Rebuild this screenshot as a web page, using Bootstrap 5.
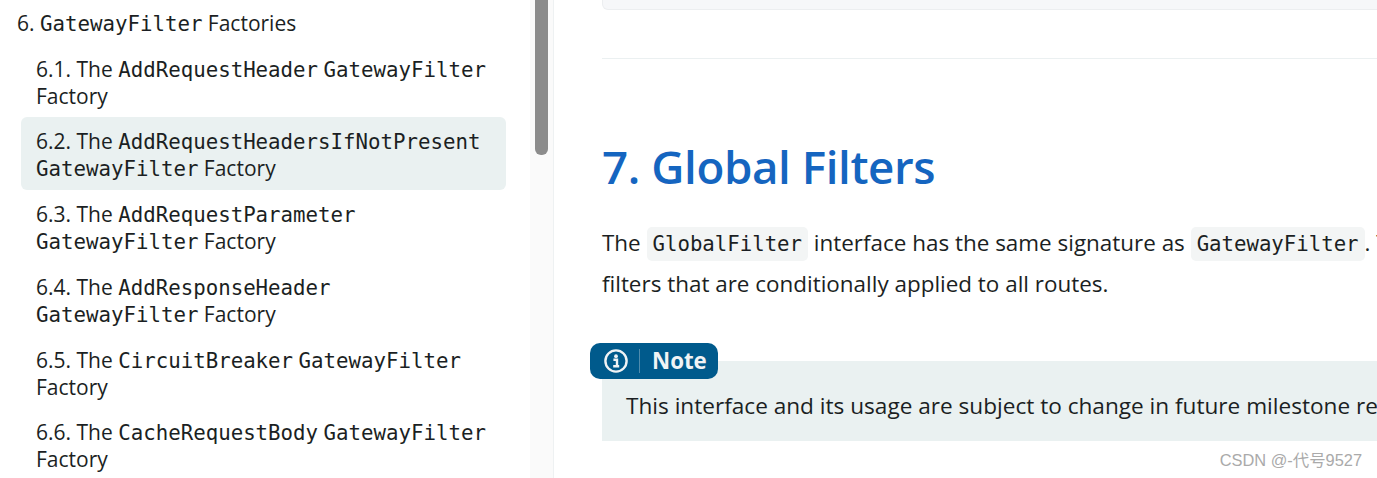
<!DOCTYPE html>
<html lang="en">
<head>
<meta charset="utf-8">
<title>Global Filters</title>
<link href="https://cdn.jsdelivr.net/npm/bootstrap@5.3.0/dist/css/bootstrap.min.css" rel="stylesheet">
<style>
html,body{height:478px;overflow:hidden;}
body{font-family:"Open Sans","Noto Sans",sans-serif;color:#1b1f23;background:#fff;font-size:21px;line-height:27px;}
code,.mono{font-family:"DejaVu Sans Mono","Liberation Mono",monospace;color:#1b1f23;line-height:1;}
.toc-pane{width:554px;height:478px;border-right:1px solid #eef1f2;}
.toc-list{width:530px;font-size:21px;}
.toc-top{padding:10px 0 0 17px;height:44.6px;}
.toc-entry{margin-left:21px;width:485px;height:72.76px;padding:11px 0 0 15px;border-radius:6px;white-space:nowrap;}
.toc-entry .mono,.toc-top .mono{font-size:20.75px;}
.toc-active{background:#eaf1f1;}
.toc-track{width:23px;background:#fafafa;padding-left:5px;}
.toc-thumb{width:13px;height:155px;background:#8c8c8c;border-radius:0 0 6px 6px;}
.main-pane{padding-left:48px;min-width:0;overflow:hidden;}
.code-tail{width:900px;height:10px;background:#f6f7f9;border:1px solid #eceef0;border-top:0;border-radius:0 0 6px 6px;}
.rule{width:900px;height:1px;background:#ebf0f1;margin-top:48px;}
.sec-title{font-size:45.7px;line-height:60px;font-weight:600;color:#1565c0;margin:77px 0 0;letter-spacing:-.4px;white-space:nowrap;}
.para{width:900px;margin:26px 0 0;line-height:41px;font-size:22.45px;white-space:nowrap;}
.para code{font-size:20.7px;background:#f3f5f5;border-radius:5px;padding:5px 6px;}
.note-box{width:900px;height:80px;background:#eaf1f1;margin-top:57px;padding:26px 0 0 24px;font-size:22.6px;white-space:nowrap;position:relative;line-height:38px;}
.note-tag{position:absolute;left:-12px;top:-18px;width:128px;height:36px;background:#005a8c;border-radius:10px;color:#f0f3f5;}
.note-tag svg{width:24px;height:24px;margin-left:14px;}
.tag-sep{width:1px;height:24px;background:#4f8bad;margin:0 12px 0 11px;}
.tag-label{font-weight:700;font-size:22.3px;line-height:36px;}
.mark-csdn{position:absolute;right:15px;bottom:8px;font:16.4px/20px "Liberation Sans","Noto Sans CJK SC",sans-serif;color:#aaa;}
</style>
</head>
<body class="d-flex position-relative">
<aside class="toc-pane d-flex flex-shrink-0">
  <div class="toc-list flex-shrink-0">
    <div class="toc-top">6. <span class="mono">GatewayFilter</span> Factories</div>
    <div class="toc-entry">6.1. The <span class="mono">AddRequestHeader</span> <span class="mono">GatewayFilter</span><br>Factory</div>
    <div class="toc-entry toc-active">6.2. The <span class="mono">AddRequestHeadersIfNotPresent</span><br><span class="mono">GatewayFilter</span> Factory</div>
    <div class="toc-entry">6.3. The <span class="mono">AddRequestParameter</span><br><span class="mono">GatewayFilter</span> Factory</div>
    <div class="toc-entry">6.4. The <span class="mono">AddResponseHeader</span><br><span class="mono">GatewayFilter</span> Factory</div>
    <div class="toc-entry">6.5. The <span class="mono">CircuitBreaker</span> <span class="mono">GatewayFilter</span><br>Factory</div>
    <div class="toc-entry">6.6. The <span class="mono">CacheRequestBody</span> <span class="mono">GatewayFilter</span><br>Factory</div>
  </div>
  <div class="toc-track"><div class="toc-thumb"></div></div>
</aside>
<main class="main-pane flex-grow-1">
  <div class="code-tail"></div>
  <div class="rule"></div>
  <h2 class="sec-title">7. Global Filters</h2>
  <p class="para">The <code>GlobalFilter</code> interface has the same signature as <code>GatewayFilter</code>. The main difference is that these are special<br>filters that are conditionally applied to all routes.</p>
  <div class="note-box">
    <div class="note-tag d-flex align-items-center">
      <svg viewBox="0 0 24 24" fill="none" aria-hidden="true"><circle cx="12" cy="12" r="10.6" stroke="#f0f3f5" stroke-width="2.4"/><circle cx="12" cy="7.2" r="1.9" fill="#f0f3f5"/><path d="M9.4 10.8h3.6v6.2M9.2 17.2h6" stroke="#f0f3f5" stroke-width="2.4"/></svg>
      <span class="tag-sep"></span>
      <span class="tag-label">Note</span>
    </div>
    This interface and its usage are subject to change in future milestone releases.
  </div>
</main>
<div class="mark-csdn">CSDN @-代号9527</div>
</body>
</html>
